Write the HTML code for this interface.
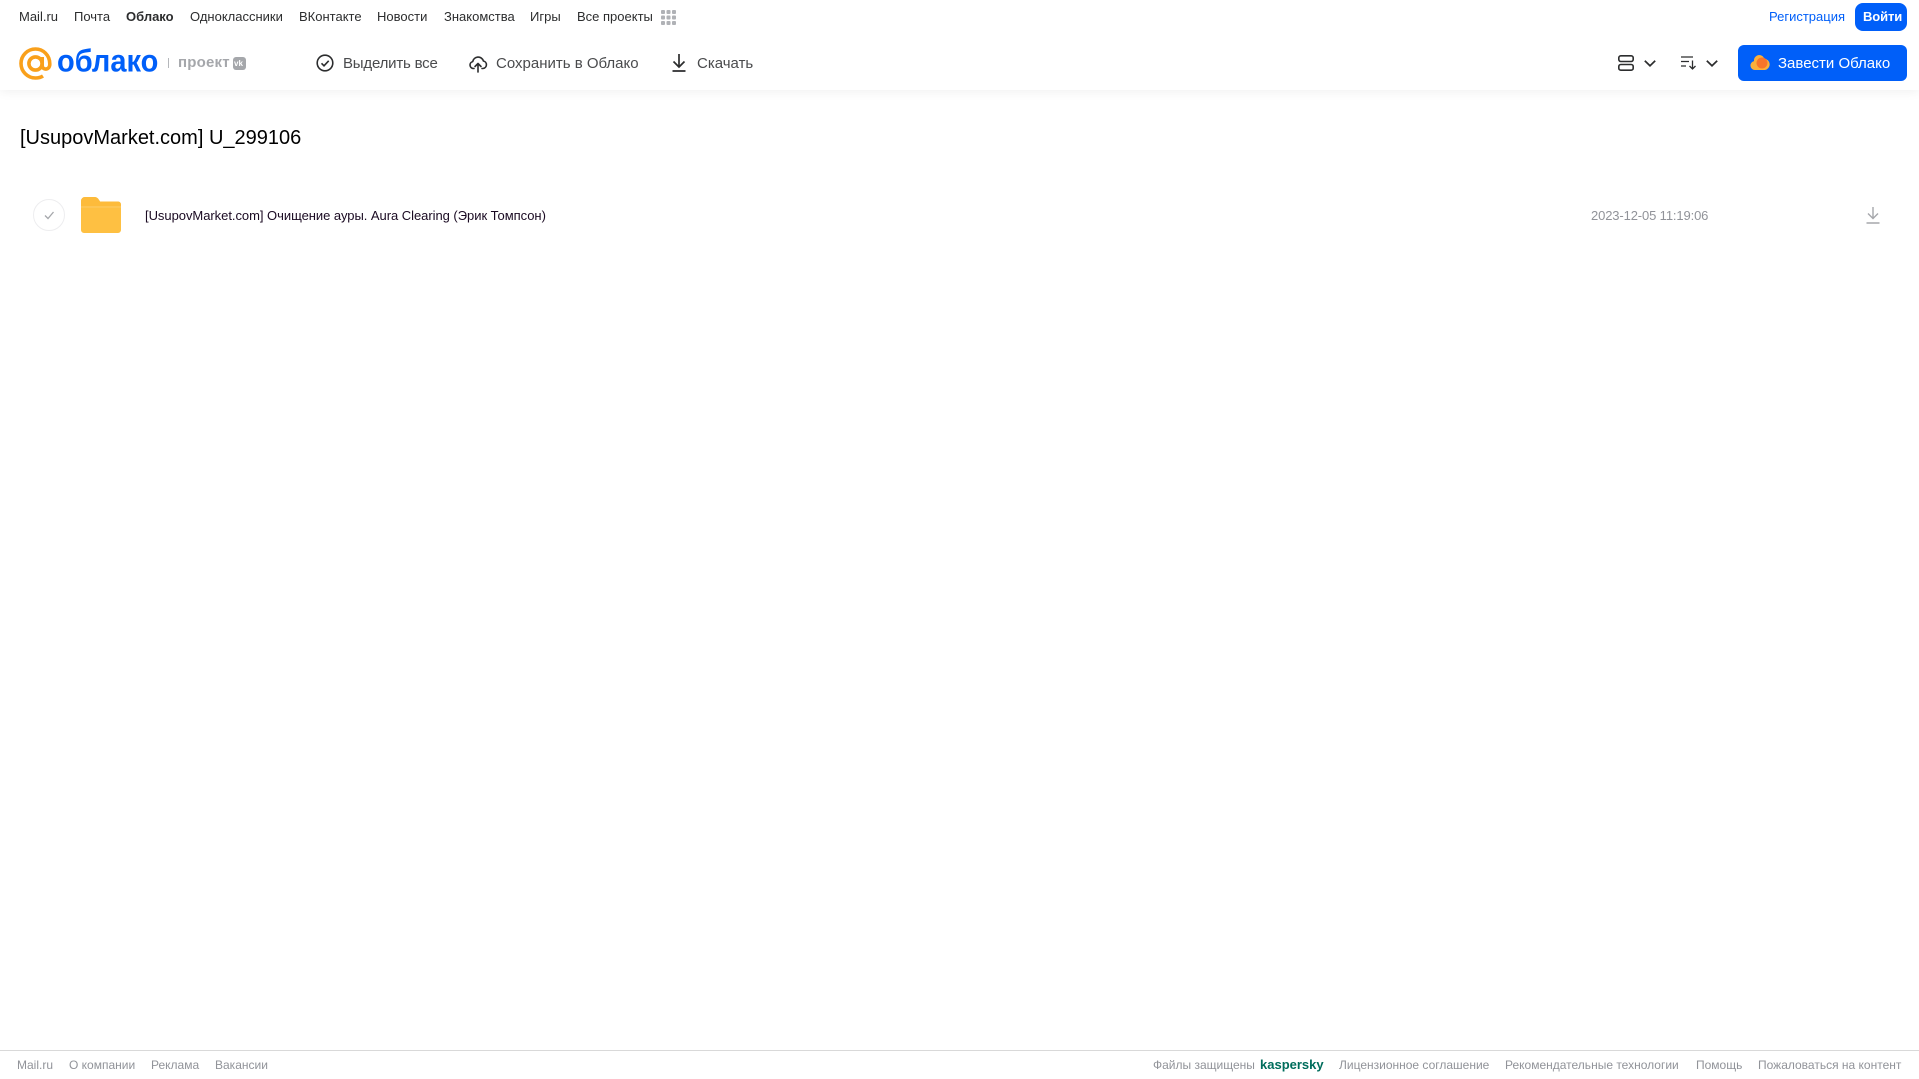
<!DOCTYPE html>
<html lang="ru"><head><meta charset="utf-8"><title>Облако</title>
<style>
html,body{margin:0;padding:0;background:#fff;width:1919px;height:1079px;overflow:hidden}
body{font-family:"Liberation Sans",Arial,sans-serif;position:relative}
.t{position:absolute;white-space:nowrap;line-height:20px}
svg{position:absolute;display:block;overflow:visible}
.n{font-size:13px;color:#2c2d2e;top:7px}
.b{font-size:15px;color:#4a4b4d;top:54px}
.f{font-size:12px;color:#919399;top:1055px}
#shadow{position:absolute;left:0;top:0;width:1919px;height:90px;background:#fff;box-shadow:0 2px 10px rgba(0,0,0,.06)}
</style></head><body>
<div id="shadow"></div>
<span class="t n" style="left:19px">Mail.ru</span>
<span class="t n" style="left:74px">Почта</span>
<span class="t n" style="left:126px;font-weight:bold;color:#2c2d2e">Облако</span>
<span class="t n" style="left:190px">Одноклассники</span>
<span class="t n" style="left:299px">ВКонтакте</span>
<span class="t n" style="left:377px">Новости</span>
<span class="t n" style="left:444px">Знакомства</span>
<span class="t n" style="left:530px">Игры</span>
<span class="t n" style="left:577px">Все проекты</span>
<svg style="left:661px;top:10px" width="15" height="15" fill="#b0b2b6"><rect width="4" height="4" rx="1"/><rect x="5.5" width="4" height="4" rx="1"/><rect x="11" width="4" height="4" rx="1"/><rect y="5.5" width="4" height="4" rx="1"/><rect x="5.5" y="5.5" width="4" height="4" rx="1"/><rect x="11" y="5.5" width="4" height="4" rx="1"/><rect y="11" width="4" height="4" rx="1"/><rect x="5.5" y="11" width="4" height="4" rx="1"/><rect x="11" y="11" width="4" height="4" rx="1"/></svg>
<span class="t" style="left:1769px;top:7px;font-size:13px;color:#005ff9">Регистрация</span>
<div style="position:absolute;left:1855px;top:3px;width:52px;height:28px;border-radius:8px;background:#005ff9"></div>
<span class="t" style="left:1863px;top:7px;font-size:13px;font-weight:bold;color:#fff;letter-spacing:-.1px">Войти</span>

<svg style="left:19px;top:47px" width="33" height="33" viewBox="0 0 33 33" fill="none" stroke="#f9a01b" stroke-width="3.6"><circle cx="16.5" cy="16.5" r="6.6"/><path d="M23.2 10v8.5c0 5 7.6 5 7.6-1.5C30.800 8 24 2 16.500 2 8.500 2 2 8.500 2 16.500S8.500 31 16.500 31c3 0 5.500-.7 7.500-2"/></svg>
<span class="t" style="left:57px;top:48px;font-size:29px;line-height:30px;font-weight:bold;color:#005ff9;transform:scaleY(1.08);transform-origin:0 100%">облако</span>
<div style="position:absolute;left:168px;top:58px;width:1px;height:10px;background:#b5b7bb"></div>
<span class="t" style="left:178px;top:53px;font-size:15px;font-weight:bold;color:#a5a7ab;letter-spacing:.2px">проект</span>
<div style="position:absolute;left:233px;top:57px;width:13px;height:13px;border-radius:3px;background:#a5a7ab"></div>
<span class="t" style="left:234px;top:58px;font-size:8px;line-height:11px;font-weight:bold;color:#fff">vk</span>

<svg style="left:316px;top:54px" width="18" height="18" viewBox="0 0 18 18" fill="none" stroke="#2c2d2e" stroke-width="1.600"><circle cx="9" cy="9" r="7.800"/><path d="M5.500 9.300l2.500 2.500 4.700-5"/></svg>
<span class="t b" style="left:343px;letter-spacing:-.2px">Выделить все</span>
<svg style="left:469px;top:54px" width="18" height="19" viewBox="0 0 18 19" fill="none" stroke="#2c2d2e" stroke-width="1.600" stroke-linecap="round" stroke-linejoin="round"><path d="M5 14.500H4.500a3.500 3.500 0 0 1-.8-6.900 5.500 5.500 0 0 1 10.700-.6 3.800 3.800 0 0 1-.4 7.500H13M9 18V10M6 12.500L9 9.500l3 3"/></svg>
<span class="t b" style="left:496px">Сохранить в Облако</span>
<svg style="left:672px;top:54px" width="14" height="18" viewBox="0 0 14 18" fill="none" stroke="#2c2d2e" stroke-width="1.700"><path d="M7 0v12.500M1.500 7.500L7 13l5.500-5.500M.5 17h13"/></svg>
<span class="t b" style="left:697px">Скачать</span>

<svg style="left:1618px;top:55px" width="16" height="16" viewBox="0 0 16 16" fill="none" stroke="#2c2d2e" stroke-width="1.600"><rect x=".8" y=".8" width="14.400" height="5.700" rx="2"/><rect x=".8" y="9.500" width="14.400" height="5.700" rx="2"/></svg>
<svg style="left:1644px;top:60px" width="12" height="7" viewBox="0 0 12 7" fill="none" stroke="#2c2d2e" stroke-width="1.700"><path d="M.8 .8L6 5.800 11.200 .8"/></svg>
<svg style="left:1681px;top:56px" width="16" height="14" viewBox="0 0 16 14" fill="none" stroke="#2c2d2e" stroke-width="1.300"><path d="M0 1h12M0 5.500h8M0 10h5M11.500 4.500V13M8.500 10l3 3 3-3"/></svg>
<svg style="left:1706px;top:60px" width="12" height="7" viewBox="0 0 12 7" fill="none" stroke="#2c2d2e" stroke-width="1.700"><path d="M.8 .8L6 5.800 11.200 .8"/></svg>

<div style="position:absolute;left:1738px;top:45px;width:169px;height:36px;border-radius:6px;background:#005ff9"></div>
<svg style="left:1750px;top:54px" width="20" height="17" viewBox="0 0 20 17"><path d="M5 16a4.500 4.500 0 0 1-1-8.900A5.500 5.500 0 0 1 9 1c2.500 0 4.500 1.500 5.300 3.700A5.700 5.700 0 0 1 15 16z" fill="#fbb03a"/><circle cx="12" cy="9" r="5.500" fill="#f7752a"/></svg>
<span class="t" style="left:1778px;top:54px;font-size:15px;color:#fff">Завести Облако</span>

<span class="t" style="left:20px;top:126px;font-size:20px;line-height:24px;color:#000">[UsupovMarket.com] U_299106</span>

<svg style="left:33px;top:199px" width="32" height="32" viewBox="0 0 32 32" fill="none"><circle cx="16" cy="16" r="15.500" stroke="#ededef"/><path d="M12 16.500l3 3 5.500-6.500" stroke="#a5a7ab" stroke-width="1.300"/></svg>
<svg style="left:81px;top:197px" width="40" height="36" viewBox="0 0 40 36"><path d="M0 4a4 4 0 0 1 4-4h9c3 0 4 1 6 4.500H37a3 3 0 0 1 3 3V33a3 3 0 0 1-3 3H3a3 3 0 0 1-3-3z" fill="#fec042"/><path d="M0 11V4a4 4 0 0 1 4-4h9c3 0 4 1 6 4.500H37a3 3 0 0 1 3 3V11z" fill="#fdb93a" opacity=".8"/><path d="M0 9h40v2H0z" fill="#fecb66" opacity=".6"/></svg>
<span class="t" style="left:145px;top:206px;font-size:13px;color:#1a0a22;letter-spacing:-.04px">[UsupovMarket.com] Очищение ауры. Aura Clearing (Эрик Томпсон)</span>
<span class="t" style="left:1591px;top:206px;font-size:13px;color:#919399;letter-spacing:-.13px">2023-12-05 11:19:06</span>
<svg style="left:1866px;top:207px" width="14" height="17" viewBox="0 0 14 17" fill="none" stroke="#a5a7ab" stroke-width="1.400"><path d="M7 0v11.500M2 6.500L7 11.500l5-5M.5 16h13"/></svg>

<div style="position:absolute;left:0;top:1050px;width:1919px;height:1px;background:#d9d9d9"></div>
<span class="t f" style="left:17px">Mail.ru</span>
<span class="t f" style="left:69px">О компании</span>
<span class="t f" style="left:151px">Реклама</span>
<span class="t f" style="left:215px">Вакансии</span>
<span class="t f" style="left:1153px">Файлы защищены</span>
<span class="t f" style="left:1260px;color:#006d5c;font-weight:bold;font-size:13px">kaspersky</span>
<span class="t f" style="left:1339px">Лицензионное соглашение</span>
<span class="t f" style="left:1505px">Рекомендательные технологии</span>
<span class="t f" style="left:1696px">Помощь</span>
<span class="t f" style="left:1758px">Пожаловаться на контент</span>
</body></html>
